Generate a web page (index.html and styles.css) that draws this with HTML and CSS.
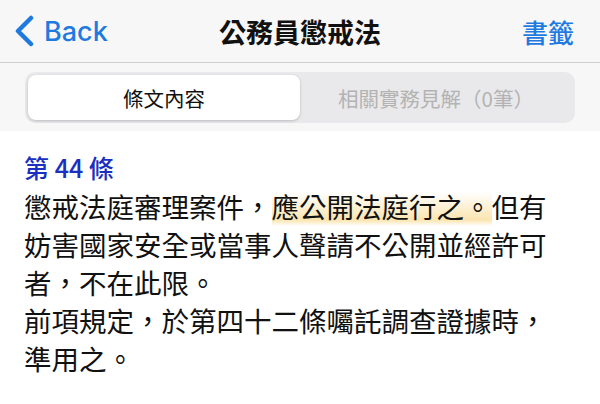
FILE: index.html
```html
<!DOCTYPE html>
<html lang="zh-Hant">
<head>
    <meta charset="UTF-8">
    <meta name="viewport" content="width=device-width, initial-scale=1.0">
    <title>公務員懲戒法</title>
    <link rel="stylesheet" href="styles.css">
</head>
<body>

<header class="navbar">
    <a class="nav-back" href="#">
        <svg class="chevron" width="22" height="32" viewBox="0 0 22 32">
            <path d="M18 3 L5 16 L18 29" fill="none" stroke="currentColor" stroke-width="4.5" stroke-linecap="round" stroke-linejoin="round"/>
        </svg>
        <span>Back</span>
    </a>
    <h1 class="nav-title">公務員懲戒法</h1>
    <a class="nav-action" href="#">書籤</a>
</header>

<div class="segment-bar">
    <div class="segments">
        <button class="segment active">條文內容</button>
        <button class="segment">相關實務見解（0筆）</button>
    </div>
</div>

<main class="article">
    <h2 class="article-no">第 44 條</h2>
    <p>懲戒法庭審理案件，<span class="hl">應公開法庭行之。</span>但有妨害國家安全或當事人聲請不公開並經許可者，不在此限。</p>
    <p>前項規定，於第四十二條囑託調查證據時，準用之。</p>
</main>

</body>
</html>
```

FILE: styles.css
```css
body {
    margin: 0;
    font-family: "Noto Sans CJK TC", "Noto Sans", sans-serif;
    background-color: #ffffff;
    color: #111111;
}
.navbar {
    height: 62px;
    display: flex;
    align-items: center;
    justify-content: space-between;
    padding: 0 26px 0 13px;
    background-color: #f7f7f7;
    border-bottom: 1px solid #cfcfcf;
    position: relative;
}
.nav-back {
    display: flex;
    align-items: center;
    gap: 9px;
    color: #1f7ae0;
    text-decoration: none;
    font-family: Inter, "Noto Sans", sans-serif;
    font-size: 27px;
    font-weight: 500;
}
.nav-title {
    position: absolute;
    left: 0;
    right: 0;
    margin: 0;
    text-align: center;
    font-size: 27px;
    font-weight: 700;
    pointer-events: none;
}
.nav-action {
    color: #1f7ae0;
    text-decoration: none;
    font-size: 26px;
    font-weight: 500;
}
.segment-bar {
    background-color: #f7f7f7;
    padding: 9px 25px 8px;
}
.segments {
    display: flex;
    background-color: #e9e9eb;
    border-radius: 10px;
    padding: 3px;
    height: 45px;
}
.segment {
    flex: 1;
    border: none;
    background: transparent;
    font-family: inherit;
    font-size: 20.5px;
    color: #b3b3b3;
    border-radius: 8px;
}
.segment.active {
    background-color: #ffffff;
    color: #111111;
    box-shadow: 0 1px 3px rgba(0, 0, 0, 0.2);
}
.article {
    padding: 18px 24px;
    width: 535px;
}
.article-no {
    margin: 0 0 2px;
    font-size: 25px;
    font-weight: 500;
    color: #1b2fc0;
    line-height: 36px;
}
.article p {
    margin: 0;
    font-size: 27.5px;
    line-height: 38px;
}
.hl {
    background: linear-gradient(to bottom, rgba(255, 255, 255, 0) 15%, rgba(248, 206, 110, 0.55) 85%, rgba(255, 255, 255, 0) 100%);
}
```
